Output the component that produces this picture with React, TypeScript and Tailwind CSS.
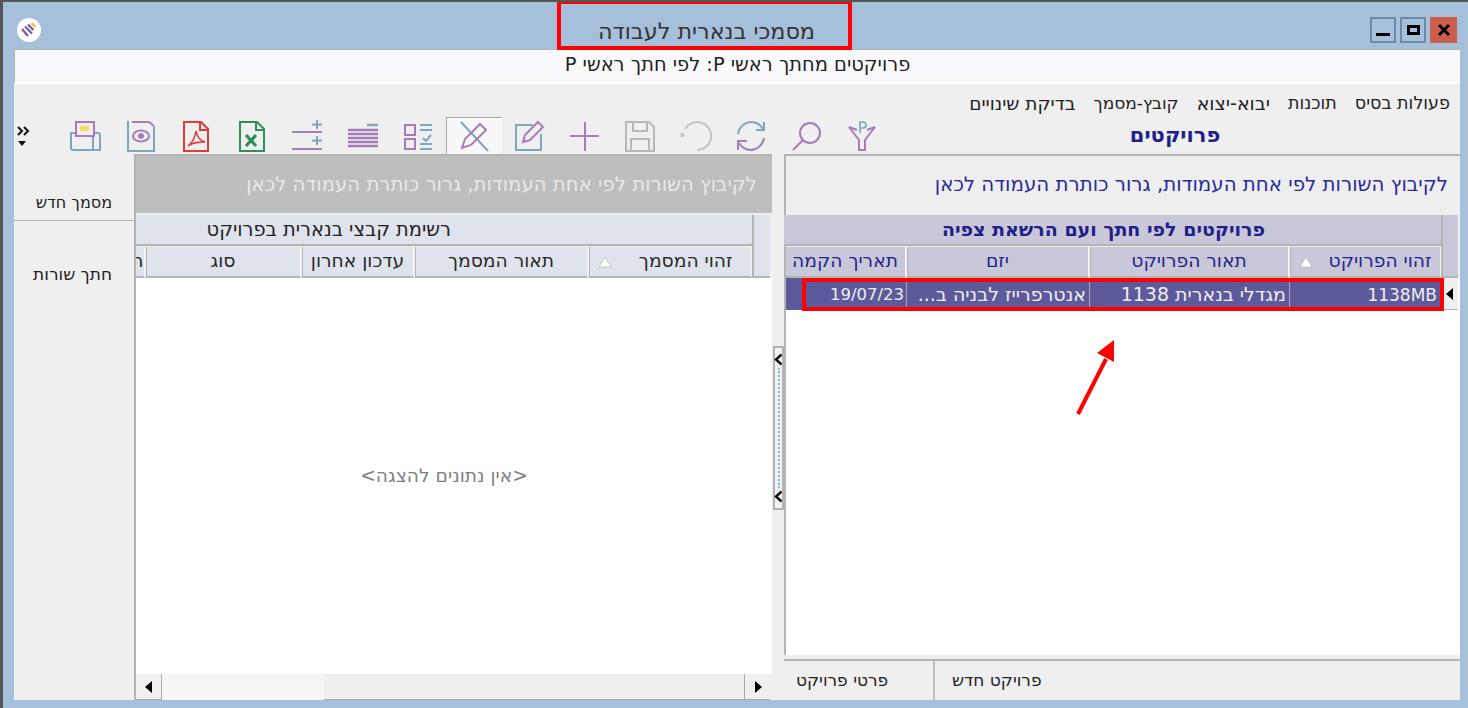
const P = "#a67db8";
const T = "#7fa6bd";

function Slot({ children, selected }: { children: React.ReactNode; selected?: boolean }) {
  return (
    <div className={"w-[55.5px] h-[37px] shrink-0 flex items-center justify-center " + (selected ? "bg-[#f8f8f9] border-t border-l border-[#a9a9a9]" : "")}>
      <svg width="32" height="32" viewBox="0 0 32 32" fill="none" strokeWidth="2">{children}</svg>
    </div>
  );
}

const tools = [
  <g key="filter" stroke={P}><path d="M3 7l8 3M29 7l-8 3M3 7l10 13v10h6V20L29 7" /><path d="M14 13V2h3a3 3 0 0 1 0 6h-3" strokeWidth="1.7" stroke={T} /></g>,
  <g key="search" stroke={P}><circle cx="19" cy="13" r="10" /><path d="M12 20L2 30" /></g>,
  <g key="refresh"><path d="M3 14C4 7 10 2 16 2c5 0 9 2 12 7" stroke={T} /><path d="M29 2v8h-8" stroke={T} /><path d="M29 18c-1 7-7 12-13 12-5 0-9-2-12-7" stroke={P} /><path d="M3 30v-9h9" stroke={P} /></g>,
  <g key="undo" stroke="#c4c4c4"><path d="M5 9A14 14 0 1 1 17 30" /><circle cx="2.5" cy="15" r="1.3" fill="#c4c4c4" /></g>,
  <g key="save" stroke="#b8b8b8"><path d="M2 2h23l5 5v24H2z" /><path d="M9 2v9h14V2M7 31V19h18v12" /></g>,
  <g key="plus" stroke={P}><path d="M16 2v29M1 16h29" /></g>,
  <g key="edit"><path d="M20 5H3v25h25V14" stroke={T} /><path d="M10 22l2-7L25 2l5 5-13 13z" stroke={P} /></g>,
  <g key="sel"><path d="M3 2l27 29" stroke={T} /><path d="M4 28l3-9L22 4l6 6-15 15z" stroke={P} /></g>,
  <g key="check" strokeWidth="2"><rect x="3" y="5" width="10" height="10" stroke={P} /><rect x="3" y="19" width="10" height="10" stroke={P} /><path d="M18 5h12M18 10h12M18 24h12M18 29h12M21 18l3 3 5-6" stroke={T} /></g>,
  <g key="lines"><path d="M20 5h11" stroke={T} strokeWidth="2.4" /><path d="M1 10h30M1 14h30M1 18h30M1 22h30M1 26h30" stroke={P} strokeWidth="2.6" /></g>,
  <g key="rows"><path d="M1 12h30M1 29h30" stroke={P} /><path d="M26 0v9M21 4.5h10M26 16v9M21 20.5h10" stroke={T} /></g>,
  <g key="xl" stroke="#2f8f5a"><path d="M4 2h17l7 7v22H4z" /><path d="M20 2v8h8" /><path d="M10 15l10 11M20 15L10 26" strokeWidth="3.2" /></g>,
  <g key="pdf" stroke="#e33b3b"><path d="M4 2h17l7 7v22H4z" /><path d="M20 2v8h8" /><path d="M8 26c4-3 7-8 8-15 1 6 5 10 9 11-6 0-12 0-17 4z" strokeWidth="1.6" /></g>,
  <g key="prev"><path d="M3 1v30h26V6" stroke={T} /><path d="M7 2h17l5 4" stroke={P} /><ellipse cx="16" cy="16" rx="8" ry="5.5" stroke={P} /><circle cx="16" cy="16" r="3" fill={P} /></g>,
  <g key="print"><path d="M2 13h27a2 2 0 0 1 2 2v15H4a2 2 0 0 1-2-2zM24 13v17" stroke={T} /><rect x="7" y="2" width="18" height="14" fill="#efefef" stroke={P} /><rect x="11" y="6" width="9" height="5" fill="#f8dc5a" /></g>,
];

function HeaderCell({ w, label, sort, blue, align = "center", pr }: { w: string; label: string; sort?: boolean; blue?: boolean; align?: string; pr?: string }) {
  return (
    <div className={w + " h-[31px] shrink-0 mx-[0.5px] overflow-hidden flex items-center border-b-2 border-r border-l border-[#b4b4b4] border-r-[#f4f4f4] " + (blue ? "bg-[#c9c8d9] text-[#24248c] " : "bg-[#dfe3ec] text-[#2a2a2a] ") + (align === "center" ? "justify-center " : "justify-start ") + (pr ?? "")}>
      <span className="whitespace-nowrap">{label}</span>
      {sort && (
        <svg className="mr-auto ml-[8px]" width="14" height="12" viewBox="0 0 14 12"><path d="M7 1l6 10H1z" fill="#fff" stroke="#c4c4c4" /></svg>
      )}
    </div>
  );
}

function Tri({ dir = "left", className = "" }: { dir?: "left" | "right"; className?: string }) {
  return (
    <svg className={className} width="8" height="12" viewBox="0 0 8 12">
      <path d={dir === "left" ? "M7 0v12L0 6z" : "M1 0v12l7-6z"} fill="#000" />
    </svg>
  );
}

function Chev() {
  return (
    <svg width="9" height="13" viewBox="0 0 9 13" fill="none"><path d="M7.5 1.5L2 6.5l5.5 5" stroke="#111" strokeWidth="2.4" /></svg>
  );
}

export default function App() {
  return (
    <div
      dir="rtl"
      className="relative w-[1468px] h-[708px] overflow-hidden flex flex-col bg-[#a6c0dc] border-t-2 border-l-[3px] border-[#555555] font-['DejaVu_Sans','Liberation_Sans',sans-serif] text-[17px] text-[#222]"
    >
      {/* Title bar */}
      <div className="h-[47px] shrink-0 flex items-center">
        <div dir="ltr" className="flex gap-[4px] mr-[11px] mt-[8px] shrink-0">
          <div className="w-[26px] h-[26px] border-2 border-[#6f8aa6] flex items-end justify-center pb-[5px]"><div className="w-[14px] h-[3px] bg-black" /></div>
          <div className="w-[26px] h-[26px] border-2 border-[#6f8aa6] flex items-center justify-center"><div className="w-[13px] h-[10px] border-[3px] border-black" /></div>
          <div className="w-[27px] h-[26px] bg-[#cb5f4c] flex items-center justify-center">
            <svg width="14" height="14" viewBox="0 0 14 14"><path d="M2 2l10 10M12 2L2 12" stroke="#000" strokeWidth="3" /></svg>
          </div>
        </div>
        <div className="mr-[555px] mt-[13px] text-[22.3px] text-[#333] whitespace-nowrap">מסמכי בנארית לעבודה</div>
        <div className="mr-auto ml-[14px] mt-[9px] w-[24px] h-[24px] rounded-full bg-white flex items-center justify-center">
          <svg width="20" height="20" viewBox="0 0 20 20" fill="none" strokeWidth="2.2">
            <path d="M3 9l6 7" stroke="#8e4a9e" />
            <path d="M6 6.5l7 7" stroke="#4d6fa8" />
            <path d="M9 4.5l5.5 5.5" stroke="#8e4a9e" />
            <path d="M12.5 3l4 4" stroke="#f4c81e" />
          </svg>
        </div>
      </div>

      {/* Subtitle */}
      <div className="h-[35px] shrink-0 ml-[11px] mr-[8px] pb-[3px] bg-[#f9f9fb] border-t border-l border-[#b4b4b4] border-b-2 border-b-[#ffffff] flex items-center justify-center text-[19.4px] text-[#222]">
        פרויקטים מחתך ראשי P: לפי חתך ראשי P
      </div>

      {/* Main */}
      <div className="flex-1 min-h-0 ml-[11px] mr-[8px] mb-[8px] bg-[#efefef] flex flex-col">
        <div className="h-[33px] shrink-0 flex items-center gap-[18px] pr-[10px] pt-[6px] text-[17.5px] text-[#222]">
          <span>פעולות בסיס</span>
          <span>תוכנות</span>
          <span className="text-[19px]">יבוא-יצוא</span>
          <span className="text-[17px]">קובץ-מסמך</span>
          <span className="text-[18.5px]">בדיקת שינויים</span>
        </div>

        <div className="h-[37px] shrink-0 flex items-center">
          <div className="w-[570px] shrink-0 flex justify-center items-center text-[21px] font-bold text-[#1f1f8a]">פרויקטים</div>
          {tools.map((t, i) => (
            <Slot key={i} selected={i === 7}>{t}</Slot>
          ))}
          <div className="flex-1 flex flex-col items-end pl-[3px] gap-[5px]">
            <svg width="13" height="10" viewBox="0 0 13 10" fill="none"><path d="M1 1l4 4-4 4M7 1l4 4-4 4" stroke="#111" strokeWidth="2" /></svg>
            <svg className="ml-[1px]" width="8" height="5" viewBox="0 0 8 5"><path d="M0 0h8L4 5z" fill="#111" /></svg>
          </div>
        </div>

        {/* Panels */}
        <div className="flex-1 min-h-0 flex">
          {/* Right panel */}
          <div className="w-[676px] shrink-0 flex flex-col border-t-2 border-[#b4b4b4]">
            <div className="flex-1 min-h-0 flex flex-col border-l-2 border-[#b4b4b4] mb-[4px]">
              <div className="h-[57px] shrink-0 bg-[#eeeeee] flex items-center pr-[12px] text-[19.8px] text-[#2a2a9a] whitespace-nowrap">לקיבוץ השורות לפי אחת העמודות, גרור כותרת העמודה לכאן</div>
              <div className="shrink-0 flex pt-[2px] pr-[2px]">
                <div className="w-[17px] h-[63px] shrink-0 bg-[#c9c8d9] border-b-2 border-l-2 border-[#b4b4b4]" />
                <div className="flex-1 flex flex-col text-[18.7px]">
                  <div className="h-[31px] bg-[#c9c8d9] border-b-2 border-[#b4b4b4] flex items-center justify-start pr-[176px] text-[19px] font-bold text-[#1f1f8a] whitespace-nowrap">פרויקטים לפי חתך ועם הרשאת צפיה</div>
                  <div className="flex pt-[1px]">
                    <HeaderCell blue w="w-[151px]" label="זהוי הפרויקט" sort align="start" pr="pr-[8px]" />
                    <HeaderCell blue w="w-[199px]" label="תאור הפרויקט" />
                    <HeaderCell blue w="w-[182px]" label="יזם" />
                    <HeaderCell blue w="w-[121px]" label="תאריך הקמה" />
                  </div>
                </div>
              </div>
              <div className="flex-1 min-h-0 bg-white">
                <div className="h-[32px] flex pr-[2px]">
                  <div className="w-[17px] shrink-0 bg-[#efefef] border-b border-l border-[#b4b4b4] flex items-center justify-center"><Tri /></div>
                  <div className="flex-1 flex bg-[#5c5a9b] text-[#eeeeee] text-[19px] items-center">
                    <div className="w-[152px] shrink-0 h-full flex items-center pr-[4px] pt-[3px] border-l border-[#a5a5b8] text-[17px]">1138MB</div>
                    <div className="w-[200px] shrink-0 h-full flex items-center pr-[3px] border-l border-[#a5a5b8] whitespace-nowrap">מגדלי בנארית 1138</div>
                    <div className="w-[183px] shrink-0 h-full flex items-center pr-[3px] border-l border-[#a5a5b8] whitespace-nowrap overflow-hidden">אנטרפרייז לבניה ב...</div>
                    <div className="flex-1 h-full flex items-center pr-[2px] pt-[3px] text-[16.5px]">19/07/23</div>
                  </div>
                </div>
              </div>
            </div>
            <div className="h-[41px] shrink-0 border-t-2 border-[#b4b4b4] flex" dir="ltr">
              <div className="w-[151px] shrink-0 border-r-2 border-[#bdbdbd] flex items-center pl-[12px]"><span dir="rtl">פרטי פרויקט</span></div>
              <div className="flex items-center pl-[17px]"><span dir="rtl">פרויקט חדש</span></div>
            </div>
          </div>

          {/* Splitter */}
          <div className="w-[12px] shrink-0 pt-[192px]">
            <div className="w-[11px] h-[164px] border-2 border-[#b4b4b4] bg-[#f2f2f2] flex flex-col items-center justify-between py-[5px]">
              <Chev />
              <div className="flex-1 my-[2px] border-l-2 border-dotted border-[#7db7ec]" />
              <Chev />
            </div>
          </div>

          {/* Left panel */}
          <div className="w-[638px] shrink-0 flex flex-col border-l-2 border-t-2 border-[#b4b4b4]">
            <div className="h-[57px] shrink-0 bg-[#bebebe] flex items-center pr-[15px] text-[19.7px] text-[#e8e8e8] whitespace-nowrap">לקיבוץ השורות לפי אחת העמודות, גרור כותרת העמודה לכאן</div>
            <div className="shrink-0 flex pt-[2px] pr-[2px]">
              <div className="w-[18px] h-[63px] shrink-0 bg-[#dfe3ec] border-b-2 border-l-2 border-[#b4b4b4]" />
              <div className="flex-1 flex flex-col min-w-0 text-[18.7px]">
                <div className="h-[31px] bg-[#dfe3ec] border-b-2 border-[#b4b4b4] flex items-center justify-start pr-[301px] text-[19.4px] whitespace-nowrap">רשימת קבצי בנארית בפרויקט</div>
                <div className="flex pt-[1px] overflow-hidden">
                  <HeaderCell w="w-[163px]" label="זהוי המסמך" sort align="start" pr="pr-[18px]" />
                  <HeaderCell w="w-[173px]" label="תאור המסמך" />
                  <HeaderCell w="w-[112px]" label="עדכון אחרון" />
                  <HeaderCell w="w-[155px]" label="סוג" />
                  <HeaderCell w="w-[10px]" label="ה" align="start" />
                </div>
              </div>
            </div>
            <div className="flex-1 min-h-0 bg-white flex items-center justify-center pr-[20px] text-[18.7px] text-[#808080]">{"<אין נתונים להצגה>"}</div>
            <div dir="ltr" className="h-[26px] shrink-0 flex">
              <div className="w-[26px] shrink-0 bg-[#f0f0f0] border-r border-b border-[#a9a9a9] flex items-center justify-center"><Tri /></div>
              <div className="w-[162px] shrink-0 bg-[#f6f6f6]" />
              <div className="flex-1 bg-[#efefef] border-b border-[#a9a9a9]" />
              <div className="w-[26px] shrink-0 bg-[#f0f0f0] border-l border-b border-[#a9a9a9] flex items-center justify-center"><Tri dir="right" /></div>
              <div className="w-[2px] shrink-0" />
            </div>
          </div>

          {/* Sidebar */}
          <div className="flex-1 min-w-0 flex flex-col">
            <div className="h-[67px] shrink-0 border-b border-[#b4b4b4] flex items-end pr-[22px] pb-[5px] text-[16px]">מסמך חדש</div>
            <div className="pr-[22px] pt-[41px]">חתך שורות</div>
          </div>
        </div>
      </div>

      {/* Annotation overlays */}
      <div className="absolute left-[554px] top-[-2px] w-[295px] h-[50px] border-[4px] border-[#ff0000]" />
      <div className="absolute left-[799px] top-[276px] w-[642px] h-[33px] border-[4px] border-[#ff0000]" />
      <svg className="absolute left-[1070px] top-[335px]" width="50" height="85" viewBox="0 0 50 85">
        <path d="M5 77L33 22" stroke="#ff0000" strokeWidth="4" fill="none" />
        <path d="M41 3L24 16L41 25z" fill="#ff0000" />
      </svg>
    </div>
  );
}
